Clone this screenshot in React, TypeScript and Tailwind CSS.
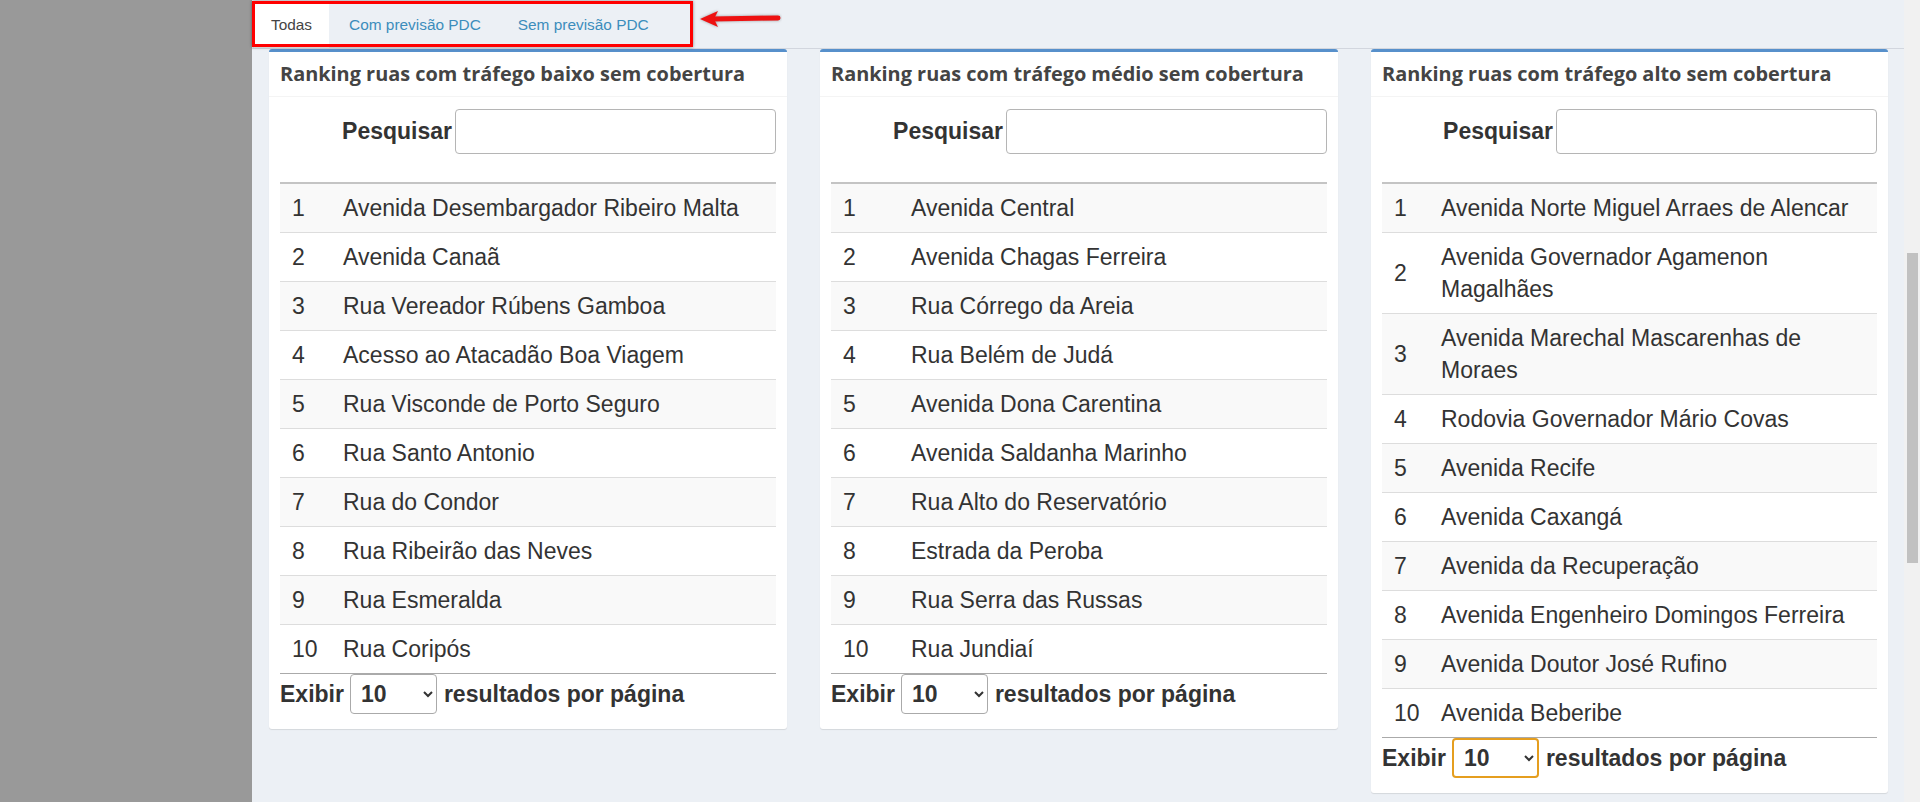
import React from 'react'

const cards: { title: string; numW: string; ruas: string[]; focused?: boolean }[] = [
  {
    title: 'Ranking ruas com tráfego baixo sem cobertura',
    numW: 'w-[55px]',
    ruas: [
      'Avenida Desembargador Ribeiro Malta',
      'Avenida Canaã',
      'Rua Vereador Rúbens Gamboa',
      'Acesso ao Atacadão Boa Viagem',
      'Rua Visconde de Porto Seguro',
      'Rua Santo Antonio',
      'Rua do Condor',
      'Rua Ribeirão das Neves',
      'Rua Esmeralda',
      'Rua Coripós',
    ],
  },
  {
    title: 'Ranking ruas com tráfego médio sem cobertura',
    numW: 'w-[72px]',
    ruas: [
      'Avenida Central',
      'Avenida Chagas Ferreira',
      'Rua Córrego da Areia',
      'Rua Belém de Judá',
      'Avenida Dona Carentina',
      'Avenida Saldanha Marinho',
      'Rua Alto do Reservatório',
      'Estrada da Peroba',
      'Rua Serra das Russas',
      'Rua Jundiaí',
    ],
  },
  {
    title: 'Ranking ruas com tráfego alto sem cobertura',
    numW: 'w-[51px]',
    focused: true,
    ruas: [
      'Avenida Norte Miguel Arraes de Alencar',
      'Avenida Governador Agamenon Magalhães',
      'Avenida Marechal Mascarenhas de Moraes',
      'Rodovia Governador Mário Covas',
      'Avenida Recife',
      'Avenida Caxangá',
      'Avenida da Recuperação',
      'Avenida Engenheiro Domingos Ferreira',
      'Avenida Doutor José Rufino',
      'Avenida Beberibe',
    ],
  },
]

const tabs = ['Todas', 'Com previsão PDC', 'Sem previsão PDC']

function RankingCard({ title, numW, ruas, focused }: { title: string; numW: string; ruas: string[]; focused?: boolean }) {
  return (
    <section className="rounded-[3px] border-t-[3px] border-[#5790cb] bg-white shadow-[0_1px_1px_rgba(0,0,0,0.1)]">
      <h3 className="flex h-[45px] items-center border-b border-[#f4f4f4] px-[11px] font-['Open_Sans',sans-serif] text-[19.9px] font-bold text-[#444]">
        {title}
      </h3>
      <div className="px-[11px] pb-[15px]">
        {/* busca */}
        <div className="flex items-center justify-end gap-[3px] pt-[12px]">
          <label className="text-[23px] font-bold text-[#333]">Pesquisar</label>
          <input type="search" className="h-[45px] w-[321px] rounded-[4px] border border-[#b5b5b5] bg-white px-2 text-[20px] outline-none" />
        </div>

        <table className="mt-[28px] w-full text-[23px] leading-[32px] text-[#333]">
          <tbody>
            {ruas.map((r, i) => (
              <tr
                key={r}
                className={
                  (i === 0 ? 'border-t-2 border-t-[#c4c4c4] ' : 'border-t border-t-[#dddddd] ') +
                  (i === ruas.length - 1 ? 'border-b border-b-[#aaaaaa] ' : '') +
                  (i % 2 === 0 ? 'bg-[#f9f9f9]' : 'bg-white')
                }
              >
                <td className={`${numW} py-[8px] pl-[12px] align-middle`}>{i + 1}</td>
                <td className="py-[8px] pl-[8px] pr-[8px] align-middle">{r}</td>
              </tr>
            ))}
          </tbody>
        </table>

        {/* paginação */}
        <div className="flex items-center text-[23px] font-bold text-[#333]">
          <span>Exibir</span>
          <select
            defaultValue="10"
            className={
              'ml-[6px] mr-[7px] h-[40px] w-[87px] rounded-[4px] bg-white pl-[6px] text-[23px] font-bold text-[#333] ' +
              (focused ? 'border-2 border-[#e59e1f]' : 'border border-[#aaaaaa]')
            }
          >
            <option value="10">10</option>
            <option value="25">25</option>
            <option value="50">50</option>
          </select>
          <span>resultados por página</span>
        </div>
      </div>
    </section>
  )
}

export default function App() {
  return (
    <div className="flex h-[802px] w-[1920px] overflow-hidden bg-[#ecf0f5] font-['Liberation_Sans',Arial,sans-serif]">
      <aside className="w-[252px] shrink-0 bg-[#999999]" />

      <main className="relative min-w-0 flex-1">
        {/* abas */}
        <ul className="flex h-[49px] items-end border-b border-[#d2d6de] pl-[2px] text-[15.4px]">
          {tabs.map((t, i) => (
            <li
              key={t}
              className={
                'flex h-[46px] items-center px-[17px] ' +
                (i === 0 ? 'bg-white text-[#444]' : 'ml-[3px] text-[#3c8dbc]')
              }
            >
              {t}
            </li>
          ))}
        </ul>

        <div className="grid grid-cols-[518px_518px_517px] items-start gap-x-[33px] pl-[17px]">
          {cards.map((c) => (
            <RankingCard key={c.title} {...c} />
          ))}
        </div>

        {/* anotação em vermelho */}
        <div className="absolute left-0 top-[1px] h-[46px] w-[441px] border-[3px] border-[#ff0000] shadow-[0_0_3px_rgba(0,0,0,0.45)]" />
        <svg className="absolute left-[446px] top-[8px]" width="84" height="22" viewBox="0 0 84 22">
          <g filter="drop-shadow(0 0 1.5px rgba(0,0,0,0.35))">
            <path d="M2 11 L20 3 L16 11 L20 19 Z" fill="#ee1111" />
            <path d="M14 11 L80 10" stroke="#ee1111" strokeWidth="5" strokeLinecap="round" />
          </g>
        </svg>
      </main>

      {/* barra de rolagem */}
      <div className="w-[16px] shrink-0 bg-[#f1f1f1] pl-[3px] pr-[2px] pt-[253px]">
        <div className="h-[310px] w-full bg-[#c1c1c1]" />
      </div>
    </div>
  )
}
